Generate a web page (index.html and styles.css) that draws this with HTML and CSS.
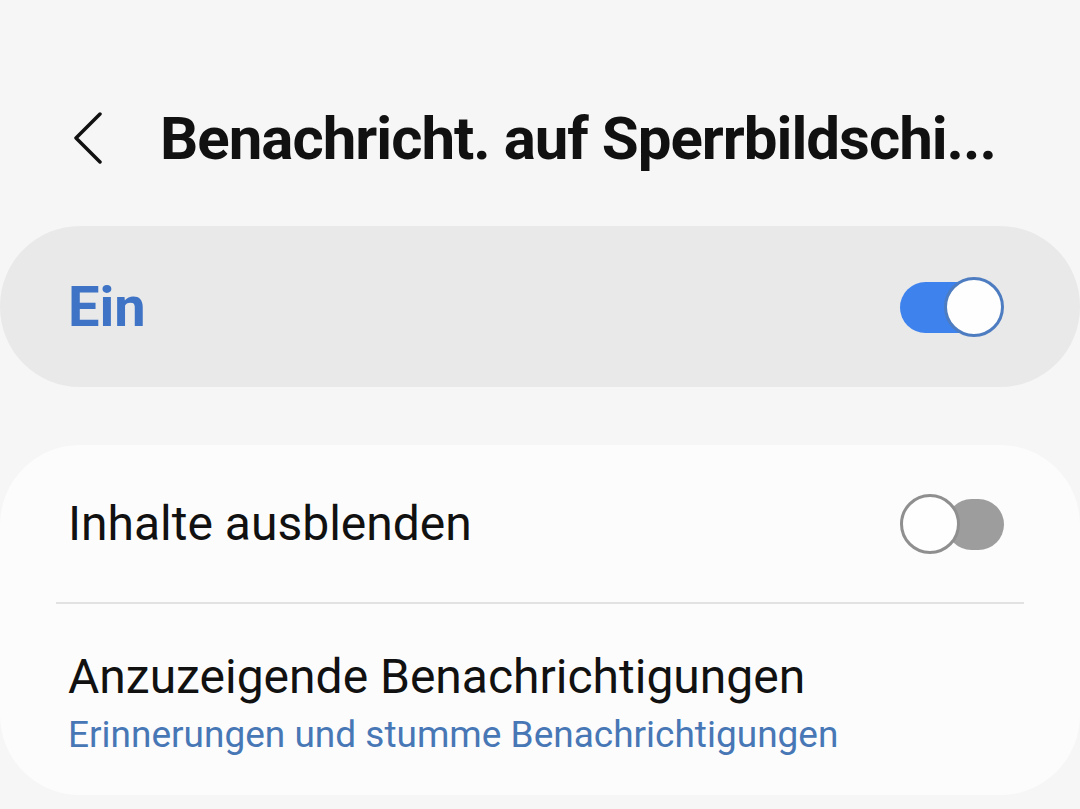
FILE: index.html
```html
<!DOCTYPE html>
<html lang="de">
<head>
<meta charset="utf-8">
<link rel="stylesheet" href="styles.css">
</head>
<body>
<div class="screen">
  <header class="header">
    <svg class="back" width="32" height="52" viewBox="0 0 32 52"><path d="M28 2 L4 26 L28 50" fill="none" stroke="#111" stroke-width="3.5" stroke-linecap="round" stroke-linejoin="round"/></svg>
    <h1 class="title">Benachricht. auf Sperrbildschi...</h1>
  </header>
  <section class="master">
    <span class="master-label">Ein</span>
    <span class="switch on"><span class="thumb"></span></span>
  </section>
  <section class="card">
    <div class="row">
      <span class="row-title">Inhalte ausblenden</span>
      <span class="switch off"><span class="thumb"></span></span>
    </div>
    <div class="divider"></div>
    <div class="row two">
      <span class="row-title">Anzuzeigende Benachrichtigungen</span>
      <span class="row-sub">Erinnerungen und stumme Benachrichtigungen</span>
    </div>
  </section>
</div>
</body>
</html>
```
FILE: styles.css
```css
html, body { margin: 0; padding: 0; }
body {
  width: 1080px;
  height: 809px;
  background: #f6f6f6;
  font-family: Roboto, "Liberation Sans", sans-serif;
  overflow: hidden;
}
.screen { display: flex; flex-direction: column; }
.header {
  height: 226px;
  display: flex;
  align-items: center;
  padding-left: 72px;
  box-sizing: border-box;
  padding-top: 50px;
}
.back { flex: none; }
.title {
  margin: 0 0 0 56px;
  font-size: 60px;
  font-weight: 700;
  color: #111;
  letter-spacing: -1px;
  white-space: nowrap;
}
.master {
  height: 161px;
  background: #e9e9e9;
  border-radius: 80px;
  display: flex;
  align-items: center;
  justify-content: space-between;
  padding: 0 76px 0 68px;
}
.master-label {
  font-size: 56px;
  font-weight: 700;
  color: #3f73c5;
}
.switch {
  position: relative;
  width: 104px;
  height: 60px;
  display: inline-block;
}
.switch::before {
  content: "";
  position: absolute;
  top: 5px;
  height: 51px;
  border-radius: 26px;
}
.switch.on::before { left: 0; width: 96px; background: #3e82ee; }
.switch.off::before { left: 46px; width: 58px; background: #9d9d9d; top: 5px; }
.thumb {
  position: absolute;
  top: 0;
  width: 54px;
  height: 54px;
  border-radius: 50%;
  background: #fefefe;
  border: 3px solid #4d7cc0;
}
.switch.on .thumb { left: 44px; }
.switch.off .thumb { left: 0; border-color: #8f8f8f; }
.card {
  margin-top: 58px;
  background: #fcfcfc;
  border-radius: 80px;
  height: 350px;
  display: flex;
  flex-direction: column;
}
.row {
  display: flex;
  align-items: center;
  justify-content: space-between;
  padding: 0 76px 0 68px;
  height: 157px;
}
.row-title {
  font-size: 48px;
  color: #111;
}
.divider {
  height: 2px;
  background: #e2e2e2;
  margin: 0 56px;
}
.row.two {
  flex-direction: column;
  align-items: flex-start;
  justify-content: flex-start;
  height: auto;
  padding-top: 44px;
}
.row-sub {
  font-size: 37px;
  color: #4877b6;
  margin-top: 8px;
}
```
